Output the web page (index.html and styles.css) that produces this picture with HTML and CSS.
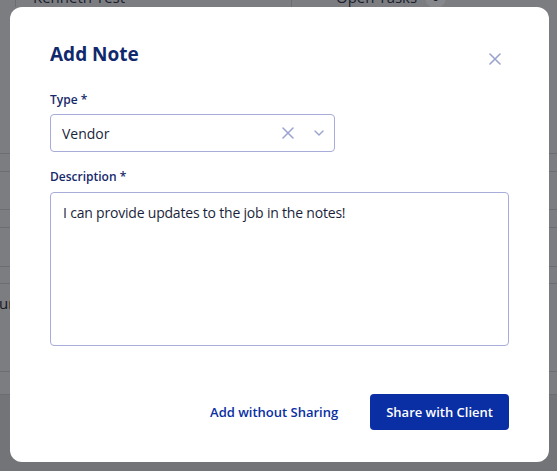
FILE: index.html
```html
<!DOCTYPE html>
<html>
  <head>
    <meta charset="utf-8" />
    <link rel="stylesheet" href="styles.css">
  </head>
  <body>
    <div class="page">
      <div class="page-top">
        <div class="crumb">
          <span class="crumb-name">Kenneth Test</span>
          <span class="crumb-caret"></span>
        </div>
        <div class="tasks">
          Open Tasks <span class="badge">0</span>
        </div>
      </div>
      <div class="page-side">
        <div class="row" style="height: 17px"></div>
        <div class="row" style="height: 37px"></div>
        <div class="row" style="height: 17px"></div>
        <div class="row" style="height: 38px"></div>
        <div class="row" style="height: 16px"></div>
        <div class="row row-text" style="height: 88px">ur</div>
        <div class="row" style="height: 22px"></div>
        <div class="row-end"></div>
      </div>
    </div>

    <div class="modal">
      <div class="modal-header">
        <h1>Add Note</h1>
        <button class="close-button" aria-label="Close">
          <svg width="12" height="12" viewBox="0 0 12 12">
            <path d="M1 1 L11 11 M11 1 L1 11" stroke="#9aa2cf" stroke-width="1.6" stroke-linecap="round" />
          </svg>
        </button>
      </div>

      <div class="field">
        <label class="field-label">Type *</label>
        <div class="select">
          <span class="select-value">Vendor</span>
          <span class="select-clear">
            <svg width="12" height="12" viewBox="0 0 12 12">
              <path d="M1 1 L11 11 M11 1 L1 11" stroke="#9aa2cf" stroke-width="1.5" stroke-linecap="round" />
            </svg>
          </span>
          <span class="select-arrow">
            <svg width="10" height="6" viewBox="0 0 10 6">
              <path d="M1 1 L5 5 L9 1" fill="none" stroke="#9aa2cf" stroke-width="1.4" stroke-linecap="round" stroke-linejoin="round" />
            </svg>
          </span>
        </div>
      </div>

      <div class="field field-wide">
        <label class="field-label">Description *</label>
        <div class="textarea">I can provide updates to the job in the notes!</div>
      </div>

      <div class="actions">
        <button class="button button-link">Add without Sharing</button>
        <button class="button button-primary">Share with Client</button>
      </div>
    </div>
  </body>
</html>
```

FILE: styles.css
```css
body {
  margin: 0;
  width: 557px;
  height: 471px;
  overflow: hidden;
  background: #7c7d81;
  font-family: "Open Sans", "Noto Sans", sans-serif;
}

/* page behind the dimmed overlay */

.page {
  height: 471px;
}

.page-top {
  display: flex;
  height: 7px;
  overflow: hidden;
  color: #1a1d2e;
  font-size: 15px;
}

.crumb {
  display: flex;
  align-items: flex-end;
  width: 258px;
  padding-left: 17px;
  border-left: 1px solid #6c6d71;
  margin-left: 15px;
  border-right: 1px solid #6c6d71;
  line-height: 20px;
  margin-top: -13px;
  height: 20px;
}

.crumb-name {
  flex: 1;
}

.crumb-caret {
  width: 5px;
  height: 1px;
  background: #5e5f63;
  margin: 0 20px 18px 0;
}

.tasks {
  display: flex;
  align-items: center;
  gap: 8px;
  margin-left: 44px;
  line-height: 20px;
  height: 20px;
  margin-top: -13px;
}

.badge {
  display: inline-block;
  width: 21px;
  height: 21px;
  border-radius: 50%;
  background: #87888c;
  text-align: center;
  font-size: 12px;
}

.page-side {
  margin-top: 146px;
}

.row {
  border-top: 1px solid #6c6d71;
}

.row-text {
  color: #151722;
  font-size: 15px;
  line-height: 20px;
  padding-top: 9px;
  box-sizing: border-box;
  text-indent: -1px;
}

.row-end {
  border-top: 1px solid #6c6d71;
  height: 80px;
  background: #737478;
}

/* modal */

.modal {
  position: absolute;
  top: 7px;
  left: 10px;
  width: 539px;
  height: 455px;
  box-sizing: border-box;
  padding: 33px 40px 32px;
  background: white;
  border-radius: 12px;
  color: #1b1f3b;
}

.modal-header {
  display: flex;
  justify-content: space-between;
  align-items: flex-start;
}

.modal-header h1 {
  margin: 0;
  font-size: 19px;
  line-height: 28px;
  font-weight: 700;
  color: #10296c;
}

.close-button {
  border: none;
  background: none;
  padding: 0;
  margin: 13px 8px 0 0;
  width: 12px;
  height: 12px;
  display: flex;
}

.field {
  margin-top: 24px;
}

.field-wide {
  margin-top: 17px;
}

.field-label {
  display: block;
  font-size: 12px;
  line-height: 16px;
  font-weight: 600;
  color: #16296b;
  margin-bottom: 6px;
}

.field-wide .field-label {
  margin-bottom: 7px;
}

.select {
  display: flex;
  align-items: center;
  width: 285px;
  height: 38px;
  box-sizing: border-box;
  padding: 0 10px 0 11px;
  border: 1px solid #a7acd9;
  border-radius: 4px;
  font-size: 14px;
}

.select-value {
  flex: 1;
}

.select-clear {
  display: flex;
  margin-right: 20px;
}

.select-arrow {
  display: flex;
}

.textarea {
  height: 154px;
  box-sizing: border-box;
  padding: 10px 12px;
  border: 1px solid #a7acd9;
  border-radius: 4px;
  font-size: 14px;
  line-height: 20px;
  letter-spacing: -0.2px;
}

.actions {
  display: flex;
  justify-content: flex-end;
  gap: 16px;
  margin-top: 48px;
}

.button {
  height: 36px;
  padding: 0 16px;
  border: none;
  border-radius: 4px;
  font-family: inherit;
  font-size: 13px;
  font-weight: 600;
}

.button-link {
  background: none;
  color: #0a2fa3;
}

.button-primary {
  background: #0a2ea3;
  color: white;
}
```
